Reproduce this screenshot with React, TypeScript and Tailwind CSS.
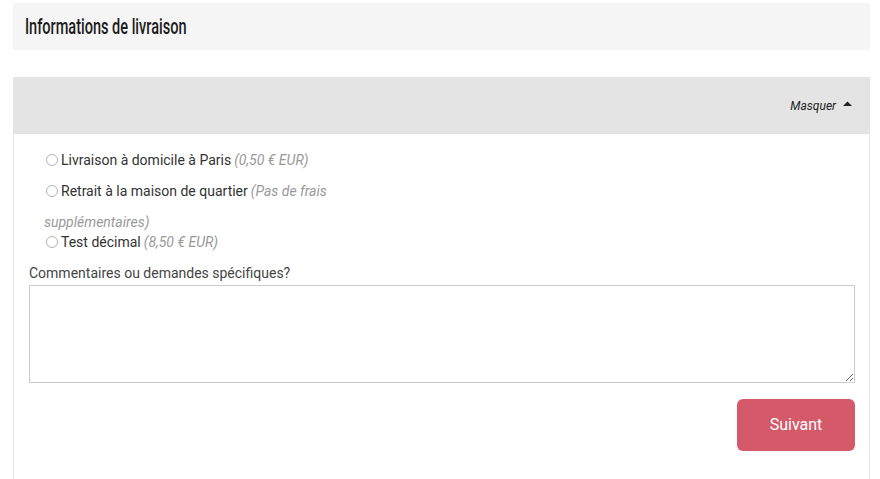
import React from "react";

function Radio() {
  return (
    <input
      type="radio"
      name="ship"
      className="appearance-none shrink-0 w-[12px] h-[12px] m-0 ml-[2px] mr-[3px] rounded-full border border-[#b3b3b3] bg-white"
    />
  );
}

export default function App() {
  const roboto = { fontFamily: "Roboto, 'Liberation Sans', sans-serif" };
  return (
    <div className="w-[880px] h-[479px] overflow-hidden bg-white" style={roboto}>
      <div className="ml-[13px] mr-[10px] pt-[3px]">
        <div className="h-[47px] bg-[#f5f5f5] pl-[12px] flex items-center">
          <h2
            className="inline-block origin-left scale-x-[0.66] text-[22px] font-medium text-[#1c1c1c] leading-none whitespace-nowrap"
            style={{ fontFamily: "Roboto, sans-serif" }}
          >
            Informations de livraison
          </h2>
        </div>

        <div className="mt-[27px] border-x border-[#e8e8e8] h-[420px]">
          <div className="-mx-px h-[57px] bg-[#e4e4e4] flex items-center justify-end pr-[18px]">
            <span className="text-[12px] italic text-[#222]">Masquer</span>
            <svg width="9" height="6" viewBox="0 0 9 6" className="ml-[7px] -mt-[3px]">
              <path d="M0 5 L4.5 0.5 L9 5 Z" fill="#222" />
            </svg>
          </div>

          <div className="pl-[30px] pt-[10px] text-[14px] text-[#333]">
            <label className="flex items-center h-[32px]">
              <Radio />
              <span>Livraison à domicile à Paris</span>
              <span className="italic text-[#999] ml-[3px]">(0,50 € EUR)</span>
            </label>
            <label className="block">
              <span className="flex items-center h-[30px]">
                <Radio />
                <span>Retrait à la maison de quartier</span>
                <span className="italic text-[#999] ml-[3px]">(Pas de frais</span>
              </span>
              <span className="block italic text-[#999] h-[20px] leading-[20px] mt-[6px]">supplémentaires)</span>
            </label>
            <label className="flex items-center h-[20px]">
              <Radio />
              <span>Test décimal</span>
              <span className="italic text-[#999] ml-[3px]">(8,50 € EUR)</span>
            </label>
          </div>

          <div className="pl-[15px] pr-[14px] mt-[11px]">
            <div className="text-[14px] text-[#444] leading-[20px]">Commentaires ou demandes spécifiques?</div>
            <textarea className="block mt-[2px] w-full h-[98px] border border-[#cccccc] bg-white outline-none" />
            <div className="flex justify-end mt-[16px]">
              <button className="w-[118px] h-[52px] rounded-[6px] bg-[#d45a6a] text-white text-[16px]">
                Suivant
              </button>
            </div>
          </div>
        </div>
      </div>
    </div>
  );
}
